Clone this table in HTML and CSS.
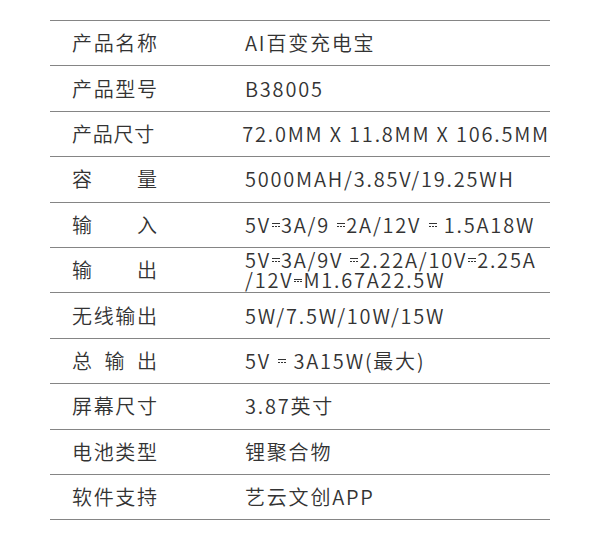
FILE: index.html
```html
<!DOCTYPE html>
<html lang="zh">
<head>
<meta charset="utf-8">
<link rel="stylesheet" href="styles.css">
</head>
<body>
<div class="spec">
  <div class="row"><div class="label"><span>产</span><span>品</span><span>名</span><span>称</span></div><div class="value">AI百变充电宝</div></div>
  <div class="row"><div class="label"><span>产</span><span>品</span><span>型</span><span>号</span></div><div class="value">B38005</div></div>
  <div class="row"><div class="label"><span>产</span><span>品</span><span>尺</span><span>寸</span></div><div class="value">72.0MM X 11.8MM X 106.5MM</div></div>
  <div class="row"><div class="label"><span>容</span><span>量</span></div><div class="value">5000MAH/3.85V/19.25WH</div></div>
  <div class="row"><div class="label"><span>输</span><span>入</span></div><div class="value">5V<span class="dc"></span>3A/9 <span class="dc"></span>2A/12V <span class="dc"></span> 1.5A18W</div></div>
  <div class="row"><div class="label"><span>输</span><span>出</span></div><div class="value two">5V<span class="dc"></span>3A/9V <span class="dc"></span>2.22A/10V<span class="dc"></span>2.25A<br>/12V<span class="dc"></span>M1.67A22.5W</div></div>
  <div class="row"><div class="label"><span>无</span><span>线</span><span>输</span><span>出</span></div><div class="value">5W/7.5W/10W/15W</div></div>
  <div class="row"><div class="label"><span>总</span><span>输</span><span>出</span></div><div class="value">5V <span class="dc"></span> 3A15W(最大)</div></div>
  <div class="row"><div class="label"><span>屏</span><span>幕</span><span>尺</span><span>寸</span></div><div class="value">3.87英寸</div></div>
  <div class="row"><div class="label"><span>电</span><span>池</span><span>类</span><span>型</span></div><div class="value">锂聚合物</div></div>
  <div class="row"><div class="label"><span>软</span><span>件</span><span>支</span><span>持</span></div><div class="value">艺云文创APP</div></div>
</div>
</body>
</html>
```
FILE: styles.css
```css
html, body {
  margin: 0;
  padding: 0;
  background: #ffffff;
}
body {
  font-family: "Noto Sans CJK SC", "Noto Sans", sans-serif;
  font-weight: 350;
  color: #333333;
}
.spec {
  width: 500px;
  margin: 20px 0 0 50px;
  border-bottom: 1px solid #858585;
}
.row {
  box-sizing: border-box;
  height: 45.4px;
  border-top: 1px solid #858585;
  display: flex;
  align-items: center;
}
.label {
  width: 85px;
  margin-left: 22px;
  display: flex;
  justify-content: space-between;
  font-size: 20px;
  line-height: 1;
}
.value {
  margin-left: 88px;
  font-size: 20px;
  letter-spacing: 1.8px;
  line-height: 1;
  white-space: nowrap;
}
.value.two {
  line-height: 20.5px;
}
.dc {
  display: inline-block;
  width: 8px;
  height: 4px;
  margin: 0 1px;
  border-top: 1.2px solid #333333;
  box-sizing: border-box;
  background: repeating-linear-gradient(90deg, #333333 0 2px, transparent 2px 3px) bottom / 100% 1.2px no-repeat;
  vertical-align: 0.28em;
}
```
